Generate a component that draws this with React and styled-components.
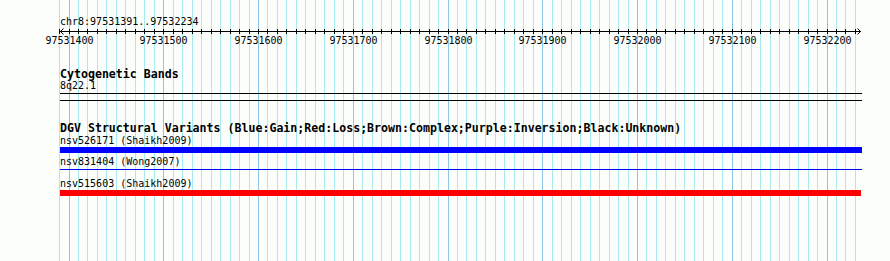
import React from 'react';
import styled, { createGlobalStyle } from 'styled-components';

const START = 97531400;
const SCALE = 0.9475;
const ORIGIN = 69;
const toX = (bp) => ORIGIN + Math.floor((bp - START) * SCALE);

const minorTicks = [];
for (let bp = 97531390; bp <= 97532230; bp += 10) minorTicks.push(bp);
const majorTicks = minorTicks.filter((bp) => bp % 100 === 0);

const variants = [
    { id: 'nsv526171', study: 'Shaikh2009', color: '#0000ff', thick: true, span: 802 },
    { id: 'nsv831404', study: 'Wong2007', color: '#0000ff', thick: false, span: 802 },
    { id: 'nsv515603', study: 'Shaikh2009', color: '#ff0000', thick: true, span: 801 },
];

const GlobalStyle = createGlobalStyle`
  html, body {
    margin: 0;
    padding: 0;
    background: #fcfefc;
  }
`

const Page = styled.div`
  position: relative;
  width: 890px;
  height: 261px;
  overflow: hidden;
  background: #fcfefc;
  color: #000;
  font-family: "DejaVu Sans Mono", "Liberation Mono", monospace;
`

const GridLayer = styled.svg`
  position: absolute;
  top: 0;
  left: 0;
  display: block;
`

const Panel = styled.div`
  position: relative;
  padding-top: 16px;
`

const ChrLabel = styled.div`
  margin-left: 60px;
  height: 12px;
  font-size: 10px;
  line-height: 12px;
  white-space: nowrap;
`

const RulerSvg = styled.svg`
  display: block;
  overflow: visible;
`

const Track = styled.div`
  margin-top: ${(p) => p.$top}px;
  margin-left: 60px;
  width: 802px;
`

const TrackTitle = styled.div`
  font-size: 11.6px;
  font-weight: bold;
  line-height: ${(p) => p.$lh || 12}px;
  height: ${(p) => p.$lh || 12}px;
  white-space: nowrap;
`

const FeatureLabel = styled.div`
  font-size: 10px;
  line-height: 11px;
  height: 11px;
  white-space: nowrap;
`

const Band = styled.div`
  margin-top: 2px;
  height: 6px;
  border-top: 1px solid #000;
  border-bottom: 1px solid #000;
`

const FeatureList = styled.div`
  padding-top: 1px;
`

const FeatureRow = styled.div`
  padding-bottom: 3px;
`

const GlyphSlot = styled.div`
  margin-top: 1px;
  height: 6px;
`

const Bar = styled.div`
  width: ${(p) => p.$span}px;
  height: ${(p) => (p.$thick ? 6 : 1)}px;
  margin-top: ${(p) => (p.$thick ? 0 : 2)}px;
  background: ${(p) => p.$color};
`

function Grid() {
    return (
        <GridLayer width="890" height="261" shapeRendering="crispEdges">
            {minorTicks.map((bp) => (
                <rect
                    key={bp}
                    x={toX(bp)}
                    y="0"
                    width="1"
                    height="261"
                    fill={bp % 100 === 0 ? '#8cc6e8' : '#a8eaf0'}
                />
            ))}
        </GridLayer>
    );
}

function Ruler() {
    return (
        <RulerSvg width="890" height="18">
            <rect x="60" y="3" width="801" height="1" fill="#000" shapeRendering="crispEdges" />
            {minorTicks.map((bp) => (
                <rect key={bp} x={toX(bp)} y="1" width="1" height="5" fill="#000" shapeRendering="crispEdges" />
            ))}
            <polyline points="63.5,0.5 60.5,3.5 63.5,6.5" fill="none" stroke="#000" strokeWidth="1" />
            <polyline points="857.5,0.5 860.5,3.5 857.5,6.5" fill="none" stroke="#000" strokeWidth="1" />
            {majorTicks.map((bp) => (
                <text
                    key={bp}
                    x={toX(bp) + 0.5}
                    y="16"
                    textAnchor="middle"
                    fontSize="10"
                    fontFamily='"DejaVu Sans Mono", "Liberation Mono", monospace'
                    fill="#000"
                >
                    {bp}
                </text>
            ))}
        </RulerSvg>
    );
}

function App() {
    return (
        <Page>
            <GlobalStyle />
            <Grid />
            <Panel>
                <ChrLabel>chr8:97531391..97532234</ChrLabel>
                <Ruler />
                <Track $top={23}>
                    <TrackTitle $lh={11}>Cytogenetic Bands</TrackTitle>
                    <FeatureLabel>8q22.1</FeatureLabel>
                    <Band />
                </Track>
                <Track $top={21}>
                    <TrackTitle>DGV Structural Variants (Blue:Gain;Red:Loss;Brown:Complex;Purple:Inversion;Black:Unknown)</TrackTitle>
                    <FeatureList>
                        {variants.map((v) => (
                            <FeatureRow key={v.id}>
                                <FeatureLabel>{v.id} ({v.study})</FeatureLabel>
                                <GlyphSlot>
                                    <Bar $color={v.color} $thick={v.thick} $span={v.span} />
                                </GlyphSlot>
                            </FeatureRow>
                        ))}
                    </FeatureList>
                </Track>
            </Panel>
        </Page>
    );
}

export default App;
